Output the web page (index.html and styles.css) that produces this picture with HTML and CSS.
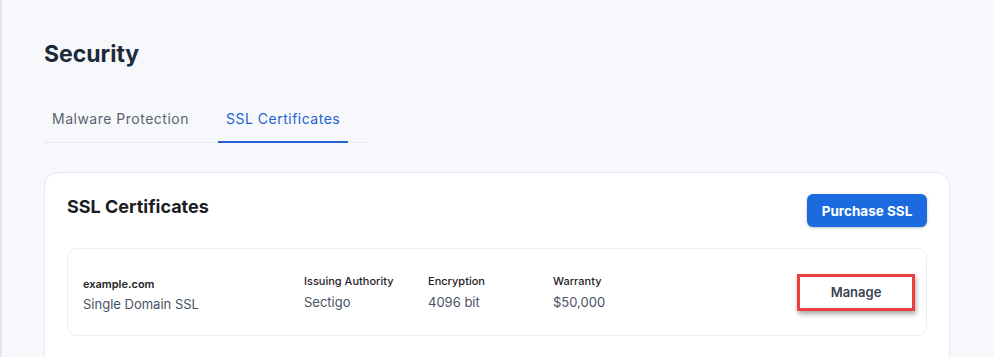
FILE: index.html
```html
<!DOCTYPE html>
<html lang="en">
<head>
<meta charset="utf-8">
<title>Security</title>
<link rel="stylesheet" href="styles.css">
</head>
<body>
<div class="page">
  <h1 class="page-title">Security</h1>
  <div class="tabs">
    <div class="tab">Malware Protection</div>
    <div class="tab tab-active">SSL Certificates</div>
  </div>
  <section class="card">
    <div class="card-header">
      <h2 class="card-title">SSL Certificates</h2>
      <button class="btn-primary">Purchase SSL</button>
    </div>
    <div class="cert-row">
      <div class="cert-name">
        <div class="domain">example.com</div>
        <div class="cert-type">Single Domain SSL</div>
      </div>
      <div class="cert-field field-issuer">
        <div class="field-label">Issuing Authority</div>
        <div class="field-value">Sectigo</div>
      </div>
      <div class="cert-field field-enc">
        <div class="field-label">Encryption</div>
        <div class="field-value">4096 bit</div>
      </div>
      <div class="cert-field field-war">
        <div class="field-label">Warranty</div>
        <div class="field-value">$50,000</div>
      </div>
      <button class="btn-manage">Manage</button>
    </div>
  </section>
</div>
</body>
</html>
```

FILE: styles.css
```css
html, body {
  margin: 0;
  padding: 0;
}
body {
  background: #f6f8fb;
  font-family: Inter, "Noto Sans", "Liberation Sans", sans-serif;
  color: #1d2939;
}
.page {
  border-left: 2px solid #e3e6ea;
  min-height: 100vh;
  box-sizing: border-box;
  padding: 40px 44px 0 42px;
}
.page-title {
  margin: 0;
  font-size: 23px;
  line-height: 29px;
  font-weight: 700;
  color: #1c2a3a;
}
.tabs {
  display: inline-flex;
  gap: 21px;
  margin-top: 32px;
  padding-right: 21px;
  border-bottom: 1px solid #e6e9ee;
}
.tab {
  padding: 8px 8px 12px;
  font-size: 14px;
  line-height: 20px;
  letter-spacing: 0.5px;
  color: #5c6270;
  border-bottom: 2px solid transparent;
  margin-bottom: -1px;
}
.tab:first-child {
  padding-left: 8px;
}
.tab-active {
  color: #2563d0;
  border-bottom-color: #2563d0;
}
.card {
  margin-top: 29px;
  background: #ffffff;
  border: 1px solid #e6e9ee;
  border-radius: 14px;
  padding: 21px 22px 40px;
}
.card-header {
  display: flex;
  justify-content: space-between;
  align-items: flex-start;
}
.card-title {
  margin: 0;
  padding-top: 1px;
  font-size: 18px;
  line-height: 24px;
  font-weight: 700;
  color: #1a1d24;
}
.btn-primary {
  width: 120px;
  height: 33px;
  padding: 0;
  border: none;
  border-radius: 6px;
  background: #1b6ae0;
  color: #ffffff;
  font-family: inherit;
  font-size: 13.5px;
  font-weight: 700;
  box-shadow: 0 1px 3px rgba(0, 0, 0, 0.25);
}
.cert-row {
  margin-top: 21px;
  height: 88px;
  box-sizing: border-box;
  border: 1px solid #ebedf0;
  border-radius: 10px;
  padding: 0 11px 0 15px;
  display: flex;
  align-items: center;
}
.cert-name {
  width: 221px;
  padding-top: 6px;
}
.domain {
  font-size: 11px;
  line-height: 15px;
  font-weight: 600;
  color: #1f2329;
}
.cert-type {
  margin-top: 3px;
  font-size: 13px;
  line-height: 18px;
  color: #4a5263;
}
.field-issuer { width: 124px; }
.field-enc { width: 125px; }
.field-war { width: 125px; }
.field-label {
  font-size: 11px;
  line-height: 15px;
  font-weight: 500;
  color: #1f2329;
}
.field-value {
  margin-top: 4px;
  font-size: 13px;
  line-height: 18px;
  color: #4a5263;
}
.btn-manage {
  margin-left: auto;
  width: 118px;
  height: 37px;
  box-sizing: border-box;
  background: #ffffff;
  border: 3px solid #e8403f;
  font-family: inherit;
  font-size: 13px;
  font-weight: 600;
  color: #3a4354;
  box-shadow: 1px 3px 5px rgba(0, 0, 0, 0.35);
}
```
